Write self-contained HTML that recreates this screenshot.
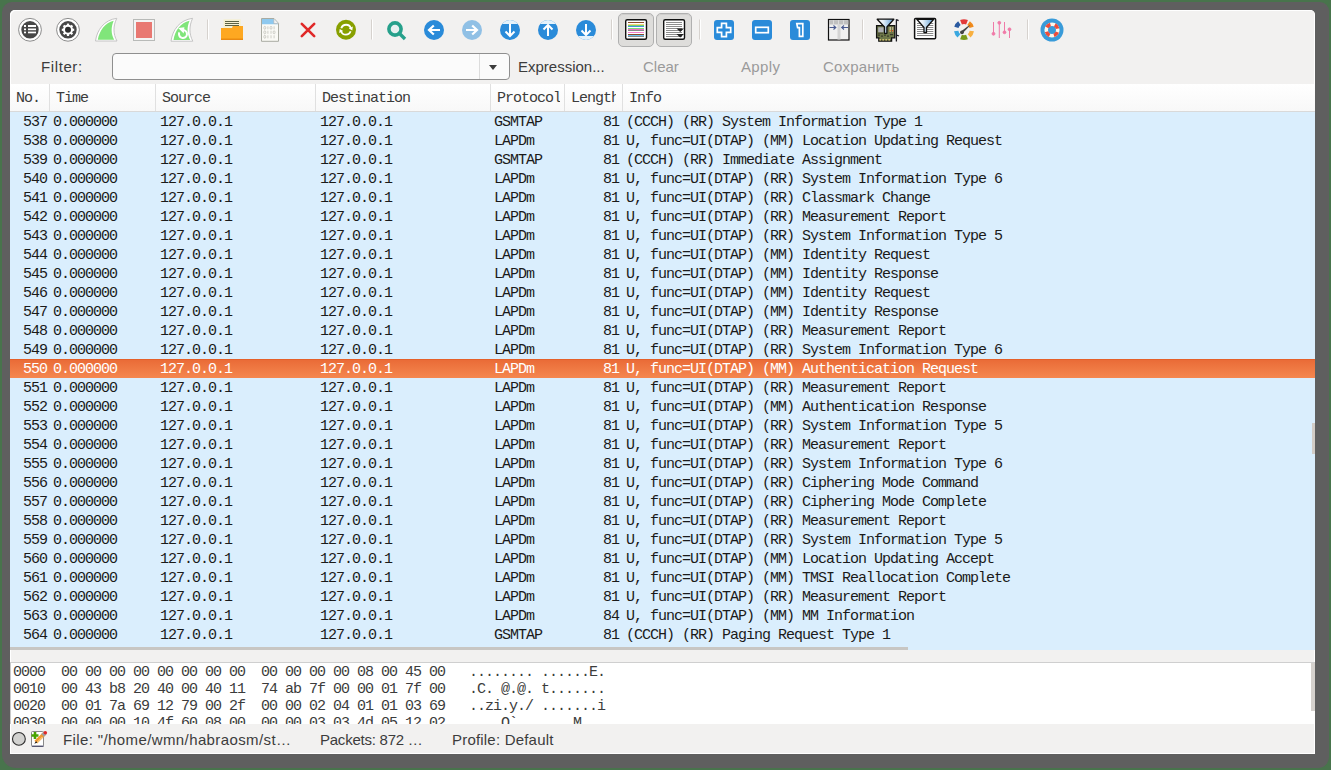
<!DOCTYPE html>
<html><head><meta charset="utf-8">
<style>
html,body{margin:0;padding:0;}
body{width:1331px;height:770px;background:#48744c;position:relative;overflow:hidden;font-family:"Liberation Sans",sans-serif;}
.a{position:absolute;}
#frame{left:2px;top:2px;width:1327px;height:766px;background:#5f5f5f;border-radius:10px 9px 11px 14px;}
#win{left:10px;top:10px;width:1305px;height:744px;background:#f2f1f0;border-radius:5px 5px 0 0;box-shadow:inset 1px 1px 0 #fff, inset -1px -1px 0 #fff;}
/* filter bar */
#flabel{left:41px;top:58px;font-size:15px;color:#3c3c3c;}
#combo{left:112px;top:53px;width:396px;height:25px;border:1px solid #8f8f8f;border-radius:4px;background:#fbfbfb;}
#combosep{left:479px;top:54px;width:1px;height:25px;background:#dcdcdc;}
#arrow{left:489px;top:65px;width:0;height:0;border-left:4px solid transparent;border-right:4px solid transparent;border-top:5px solid #3c3c3c;}
.fbtn{top:58px;font-size:15px;}
/* header */
#hdr{left:10px;top:84px;width:1305px;height:27px;background:linear-gradient(#fff,#f8f8f8);border-bottom:1px solid #d9d9d9;}
.hs{top:84px;width:1px;height:27px;background:#e0e0e0;}
.ht{top:89px;line-height:19px;font-family:"Liberation Mono",monospace;font-size:15px;letter-spacing:-1px;color:#3c3c3c;white-space:pre;overflow:hidden;}
/* list */
#list{left:10px;top:112px;width:1305px;height:538px;background:#daeefd;}
.r{position:absolute;left:10px;width:1305px;height:19px;font-family:"Liberation Mono",monospace;font-size:15px;letter-spacing:-1px;color:#1a1a1a;white-space:pre;line-height:19px;}
.r span{position:absolute;top:1px;}
.r .c0{left:13px;width:23px;text-align:right;}
.r .c1{left:43px;}
.r .c2{left:150px;}
.r .c3{left:310px;}
.r .c4{left:484px;}
.r .c5{left:570px;width:39px;text-align:right;}
.r .c6{left:616px;}
.r.sel{background:linear-gradient(#e25a22 0px,#ea6c38 1.5px,#f5874f 19px);color:#fff;}
#hscroll{left:10px;top:647px;width:898px;height:3px;background:#c8c6c3;}
#vscroll{left:1312px;top:423px;width:3px;height:31px;background:#d2ccc6;}
/* hex */
#hexsep{left:10px;top:662px;width:1305px;height:1px;background:#cfcfcf;}
#hex{left:10px;top:663px;width:1305px;height:61px;background:#fff;overflow:hidden;}
.hx{position:absolute;left:3px;margin-top:1px;font-family:"Liberation Mono",monospace;font-size:15px;letter-spacing:-1px;color:#3c3c3c;white-space:pre;line-height:17px;}
/* status */
.st{top:731px;font-size:15px;color:#3c3c3c;white-space:pre;}
</style></head><body>
<div id="frame" class="a"></div>
<div id="win" class="a"></div>
<svg class="a" style="left:0;top:0" width="1331" height="52" viewBox="0 0 1331 52">
<!-- separators -->
<g fill="#d6d2ce">
<rect x="207" y="19.5" width="1" height="20"/><rect x="371" y="19.5" width="1" height="20"/>
<rect x="611" y="19.5" width="1" height="20"/><rect x="699" y="19.5" width="1" height="20"/>
<rect x="862" y="19.5" width="1" height="20"/><rect x="1027" y="19.5" width="1" height="20"/>
</g>
<g fill="#ffffff">
<rect x="208" y="19.5" width="1" height="20"/><rect x="372" y="19.5" width="1" height="20"/>
<rect x="612" y="19.5" width="1" height="20"/><rect x="700" y="19.5" width="1" height="20"/>
<rect x="863" y="19.5" width="1" height="20"/><rect x="1028" y="19.5" width="1" height="20"/>
</g>
<!-- 1 interfaces -->
<circle cx="30" cy="29.8" r="11.4" fill="#fff" stroke="#8c8c8c" stroke-width="1"/>
<circle cx="30" cy="29.8" r="8.7" fill="#474747"/>
<g fill="#fff">
<rect x="24" y="25" width="2" height="2"/><rect x="24" y="28.5" width="2" height="1.7"/><rect x="24" y="31.6" width="2" height="1.7"/>
<rect x="28" y="25" width="8" height="2"/><rect x="28" y="28.5" width="8" height="1.7"/><rect x="28" y="31.6" width="8" height="1.7"/>
</g>
<!-- 2 options gear -->
<circle cx="68" cy="29.8" r="11.4" fill="#fff" stroke="#8c8c8c" stroke-width="1"/>
<circle cx="68" cy="29.8" r="8.7" fill="#474747"/>
<g transform="translate(68,29.8)">
<circle r="5" fill="#fff"/>
<g fill="#fff">
<rect x="-1.1" y="-6.2" width="2.2" height="12.4"/>
<rect x="-1.1" y="-6.2" width="2.2" height="12.4" transform="rotate(45)"/>
<rect x="-1.1" y="-6.2" width="2.2" height="12.4" transform="rotate(90)"/>
<rect x="-1.1" y="-6.2" width="2.2" height="12.4" transform="rotate(135)"/>
</g>
<circle r="3" fill="#2e2e2e"/>
</g>
<!-- 3 start fin -->
<path d="M95.5 41 C97 30 104 20 116.8 18.3 C113 26 113 34 117 41 Z" fill="#fff" stroke="#c4c4c4" stroke-width="1"/>
<path d="M97.8 39.8 C99.5 30.5 105 23 113.7 20.8 C110.8 27.5 111 34 114.2 39.8 Z" fill="#80e57a"/>
<!-- 4 stop -->
<rect x="133.5" y="19.5" width="21" height="21" fill="#f4f4f4" stroke="#b8bab8" stroke-width="1"/>
<rect x="136" y="22" width="16" height="16" fill="#e97872"/>
<!-- 5 restart fin -->
<path d="M171 41.2 C172.5 30 179.5 20 192.6 18.3 C189 26 189 34 192.8 41.2 Z" fill="#fff" stroke="#c4c4c4" stroke-width="1"/>
<path d="M173.5 40 C175 30.5 180.5 23 189.6 20.8 C186.7 27.5 187 34 190.2 40 Z" fill="#80e57a"/>
<path d="M183 30 A4 4 0 1 1 179.3 32.4" fill="none" stroke="#fff" stroke-width="2"/>
<path d="M178.2 28 L184.4 27.3 L183.7 33.6 Z" fill="#fff"/>
<!-- 6 open folder -->
<rect x="223.5" y="19.3" width="17.3" height="9" fill="#f6f0d2"/>
<g fill="#5c6244"><rect x="225" y="21" width="14" height="1"/><rect x="225" y="23" width="14" height="1"/><rect x="225" y="25" width="14" height="1"/></g>
<path d="M221 27.9 L232 27.9 L232.8 26.1 L243 26.1 L243 39.8 L221 39.8 Z" fill="#fea821"/>
<rect x="221" y="38.6" width="22" height="1.3" fill="#e8860c"/>
<!-- 7 document -->
<path d="M261.5 18.5 L274 18.5 L278.5 23.3 L278.5 41.3 L261.5 41.3 Z" fill="#fafaf6" stroke="#a9aba2" stroke-width="1"/>
<path d="M262 19 L273.7 19 L278 23.5 L278 24.2 L262 24.2 Z" fill="#8ec9ef"/>
<path d="M273.8 19 L273.8 23.6 L278.2 23.6" fill="#f2f2f2" stroke="#b0b0b0" stroke-width="0.6"/>
<g fill="none" stroke="#c4c4bc" stroke-width="0.8"><ellipse cx="264.8" cy="27.8" rx="1" ry="1.5"/><path d="M267.90000000000003 26.3 v3"/><ellipse cx="271.0" cy="27.8" rx="1" ry="1.5"/><path d="M274.1 26.3 v3"/><ellipse cx="264.8" cy="32.3" rx="1" ry="1.5"/><path d="M267.90000000000003 30.8 v3"/><path d="M271.0 30.8 v3"/><ellipse cx="274.1" cy="32.3" rx="1" ry="1.5"/><ellipse cx="264.8" cy="36.8" rx="1" ry="1.5"/><path d="M267.90000000000003 35.3 v3"/><path d="M271.0 35.3 v3"/><path d="M274.1 35.3 v3"/></g>
<!-- 8 close X -->
<path d="M301.8 23.8 L314.2 36.2 M314.2 23.8 L301.8 36.2" stroke="#e02828" stroke-width="2.6" stroke-linecap="round"/>
<!-- 9 reload -->
<circle cx="346" cy="29.8" r="10" fill="#88a000"/>
<path d="M341.3 28.3 A5 5 0 0 1 350.9 28.4" fill="none" stroke="#fff" stroke-width="1.8"/>
<path d="M350.6 31.3 A5 5 0 0 1 341.1 31.2" fill="none" stroke="#fff" stroke-width="1.8"/>
<path d="M352.8 26.5 L352.3 30.5 L348.8 28.6 Z" fill="#fff"/>
<path d="M339.2 33.1 L339.7 29.1 L343.2 31 Z" fill="#fff"/>
<!-- 10 find -->
<circle cx="395" cy="29" r="6.1" fill="#e8f0f0" stroke="#26a08b" stroke-width="3.6"/>
<path d="M399.5 33.5 L403.8 37.8" stroke="#26a08b" stroke-width="3.4" stroke-linecap="square"/>
<!-- 11 back -->
<circle cx="434" cy="30" r="10" fill="#2a8bd9"/>
<path d="M440 30 L429.5 30 M433.8 25.5 L429 30 L433.8 34.5" fill="none" stroke="#fff" stroke-width="2.2"/>
<!-- 12 forward -->
<circle cx="472" cy="30" r="10" fill="#90c0e5"/>
<path d="M466 30 L476.5 30 M472.2 25.5 L477 30 L472.2 34.5" fill="none" stroke="#fff" stroke-width="2.2"/>
<!-- 13 goto -->
<defs><linearGradient id="fun" x1="0" y1="0" x2="1" y2="0"><stop offset="0" stop-color="#ffffff"/><stop offset="0.35" stop-color="#e8f2fa"/><stop offset="1" stop-color="#5c9ed6"/></linearGradient><clipPath id="cl13"><circle cx="510" cy="30" r="10"/></clipPath><clipPath id="cl14"><circle cx="548" cy="30" r="10"/></clipPath><clipPath id="cl15"><circle cx="586" cy="30" r="10"/></clipPath></defs>
<g clip-path="url(#cl13)"><rect x="500" y="20" width="20" height="20" fill="#2a8bd9"/><rect x="500" y="19" width="20" height="5" fill="#e4f2fb"/></g>
<path d="M510 24 L510 36 M505.5 31.5 L510 36 L514.5 31.5" fill="none" stroke="#fff" stroke-width="2"/>
<!-- 14 first -->
<g clip-path="url(#cl14)"><rect x="538" y="20" width="20" height="20" fill="#2a8bd9"/><rect x="538" y="19" width="20" height="5" fill="#e4f2fb"/></g>
<path d="M548 36 L548 25 M543.5 29.5 L548 25 L552.5 29.5" fill="none" stroke="#fff" stroke-width="2"/>
<!-- 15 last -->
<g clip-path="url(#cl15)"><rect x="576" y="20" width="20" height="20" fill="#2a8bd9"/><rect x="576" y="36" width="20" height="5" fill="#e4f2fb"/></g>
<path d="M586 24 L586 35 M581.5 30.5 L586 35 L590.5 30.5" fill="none" stroke="#fff" stroke-width="2"/>
<!-- 16/17 toggled coloring buttons -->
<rect x="618.5" y="13.5" width="35" height="33" rx="4.5" fill="#dedddb" stroke="#b0b0b0" stroke-width="1"/>
<rect x="656.5" y="13.5" width="35" height="33" rx="4.5" fill="#dedddb" stroke="#b0b0b0" stroke-width="1"/>
<path d="M620 16.5 Q620 14.5 623 14.5 L649 14.5 Q652 14.5 652 16.5" fill="none" stroke="#cfcecc" stroke-width="1"/>
<path d="M658 16.5 Q658 14.5 661 14.5 L687 14.5 Q690 14.5 690 16.5" fill="none" stroke="#cfcecc" stroke-width="1"/>
<rect x="625.7" y="19.7" width="20.8" height="19.5" rx="1.5" fill="#fff" stroke="#111" stroke-width="1.4"/>
<g>
<rect x="628" y="22" width="16" height="1" fill="#8a4a2a"/>
<rect x="628" y="24" width="16" height="1" fill="#f6d57a"/>
<rect x="628" y="25" width="16" height="1" fill="#72d36e"/>
<rect x="628" y="26" width="16" height="1" fill="#4a8fe0"/>
<rect x="628" y="28" width="16" height="1" fill="#76dc76"/>
<rect x="628" y="29" width="16" height="1" fill="#ee70c2"/>
<rect x="628" y="30" width="16" height="1" fill="#888"/>
<rect x="628" y="32" width="16" height="1" fill="#f27ed0"/>
<rect x="628" y="34" width="16" height="1" fill="#8a4a2a"/>
<rect x="628" y="35" width="16" height="1" fill="#66c2f2"/>
<rect x="628" y="36" width="16" height="1" fill="#888"/>
</g>
<rect x="663.7" y="19.7" width="20.8" height="19.5" rx="1.5" fill="#fff" stroke="#111" stroke-width="1.4"/>
<g fill="#8c8c8c">
<rect x="666" y="22" width="16" height="1"/><rect x="666" y="24" width="16" height="1"/><rect x="666" y="26" width="16" height="1"/>
<rect x="666" y="28" width="16" height="1"/><rect x="666" y="30" width="16" height="1"/><rect x="666" y="32" width="16" height="1"/>
<rect x="666" y="34" width="16" height="1"/><rect x="666" y="36" width="16" height="1"/>
</g>
<path d="M676.5 28.5 L684 28.5 L680.2 32 Z M676.5 34 L684 34 L680.2 37.5 Z" fill="#222"/>
<!-- zoom in/out/normal -->
<rect x="714" y="20" width="20" height="20" rx="3" fill="#2a8bd9"/>
<path d="M721.6 23.3 h4.8 v4.3 h4.3 v4.8 h-4.3 v4.3 h-4.8 v-4.3 h-4.3 v-4.8 h4.3 Z" fill="none" stroke="#fff" stroke-width="1.7"/>
<rect x="752" y="20" width="20" height="20" rx="3" fill="#2a8bd9"/>
<rect x="755.7" y="27.3" width="12.6" height="5.4" fill="none" stroke="#fff" stroke-width="1.7"/>
<rect x="790" y="20" width="20" height="20" rx="3" fill="#2a8bd9"/>
<path d="M796.8 23.6 h6 v12.8 h-3.4 v-8.8 h-1.8 Z" fill="none" stroke="#fff" stroke-width="1.7"/>
<!-- resize columns -->
<rect x="828.5" y="19.5" width="20.5" height="20.5" fill="#f0f0f0" stroke="#111" stroke-width="1.2"/>
<rect x="829.2" y="20.2" width="19.2" height="4.3" fill="#c0c0c0"/>
<g fill="#e8e8e8"><rect x="833" y="20.2" width="0.7" height="4.3"/><rect x="838" y="20.2" width="0.7" height="4.3"/><rect x="843" y="20.2" width="0.7" height="4.3"/></g>
<rect x="837.5" y="24.5" width="3" height="15" fill="#d4d4d4"/>
<path d="M829.5 27.5 L835.5 27.5 M833.5 25.5 L835.8 27.5 L833.5 29.5 M848 27.5 L842 27.5 M844 25.5 L841.7 27.5 L844 29.5" fill="none" stroke="#4a5a90" stroke-width="1.1"/>
<!-- capture filter -->
<path d="M876.6 25.6 L894.8 25.6 L894.8 37.8 L891.6 37.8 L891.6 41.2 L878.8 41.2 L878.8 37.8 L876.6 37.8 Z" fill="#6d7748" stroke="#111" stroke-width="1.3"/>
<rect x="878.2" y="27.3" width="5.5" height="5" fill="#aeb0b4"/>
<g fill="#3a3a2a"><rect x="878" y="34.5" width="2" height="1.2"/><rect x="881" y="35.5" width="2" height="1.2"/><rect x="884" y="34.5" width="2" height="1.2"/><rect x="887" y="35.5" width="2" height="1.2"/><rect x="890" y="34" width="3" height="1.2"/><rect x="878" y="32.8" width="5" height="0.8"/></g>
<g fill="#e6cf7a"><rect x="879.5" y="39" width="1.3" height="1.6"/><rect x="882.5" y="39" width="1.3" height="1.6"/><rect x="885.5" y="39" width="1.3" height="1.6"/><rect x="888.5" y="39" width="1.3" height="1.6"/></g>
<g><rect x="889.6" y="27" width="1.2" height="5" fill="#d8d0a8"/><rect x="889.6" y="30" width="1.2" height="1.5" fill="#e07020"/><rect x="892" y="27" width="1.2" height="5" fill="#b8a888"/><rect x="892" y="30" width="1.2" height="1.5" fill="#d05020"/></g>
<path d="M896.4 19.2 L896.4 41.6 M896.4 19.5 L898.6 20.6 M896.4 35 L899 36" stroke="#1a1a22" stroke-width="1.3" fill="none"/>
<path d="M877.2 19.2 L893.8 19.2 L886.9 27 L886.9 33.3 L884.5 33.3 L884.5 27 Z" fill="url(#fun)" stroke="#111" stroke-width="1.3" stroke-linejoin="round"/>
<!-- display filter -->
<rect x="914.6" y="18.4" width="21" height="20.4" rx="1" fill="#fff" stroke="#111" stroke-width="1.5"/>
<g fill="#8a8a8a"><rect x="917" y="23" width="16.3" height="1"/><rect x="917" y="25" width="16.3" height="1"/><rect x="917" y="27" width="16.3" height="1"/><rect x="917" y="29" width="16.3" height="1"/><rect x="917" y="31" width="16.3" height="1"/><rect x="917" y="33" width="16.3" height="1"/><rect x="917" y="35" width="16.3" height="1"/></g>
<path d="M916.8 19.3 L933.7 19.3 L926.5 27.5 L926.5 32.5 L924 32.5 L924 27.5 Z" fill="url(#fun)" stroke="#111" stroke-width="1.3" stroke-linejoin="round"/>
<!-- coloring rules dial -->
<g transform="translate(964,29.6)" fill="none" stroke-width="4.4">
<path d="M-3 -7.4 A8 8 0 0 1 3 -7.4" stroke="#e23a3a" stroke-width="4.8"/>
<path d="M4.6 -6.5 A8 8 0 0 1 7.6 -2.3" stroke="#f08a1c"/>
<path d="M7.8 1.4 A8 8 0 0 1 5.1 6.2" stroke="#f8b040"/>
<path d="M3 7.4 A8 8 0 0 1 -3 7.4" stroke="#7a9a1a" stroke-width="4.8"/>
<path d="M-5.1 6.2 A8 8 0 0 1 -7.8 1.4" stroke="#3aa8e0"/>
<path d="M-7.6 -2.3 A8 8 0 0 1 -4.6 -6.5" stroke="#2a5aa0"/>
</g>
<path d="M960.5 31.8 L967.5 26.5 L970.5 24.8 L968.2 27.6 L962.3 33.6 Z" fill="#444"/>
<circle cx="962" cy="32.3" r="1.9" fill="#444"/>
<!-- prefs sliders -->
<g stroke="#f07aa8" stroke-width="1" fill="#f07aa8">
<line x1="993.5" y1="22" x2="993.5" y2="34"/><circle cx="993.5" cy="33.8" r="1.4"/>
<line x1="999.3" y1="23" x2="999.3" y2="38"/><circle cx="999.3" cy="22.8" r="1.4"/>
<line x1="1004.5" y1="22" x2="1004.5" y2="32.5"/><circle cx="1004.5" cy="32.3" r="1.4"/>
<line x1="1009.5" y1="29.5" x2="1009.5" y2="38"/><circle cx="1009.5" cy="29.3" r="1.4"/>
</g>
<!-- help lifebuoy -->
<circle cx="1052" cy="30" r="11.5" fill="#399bd9"/>
<circle cx="1052" cy="30" r="5.8" fill="none" stroke="#fbf8ee" stroke-width="3.6"/>
<circle cx="1052" cy="30" r="5.8" fill="none" stroke="#ec4c3a" stroke-width="3.6" stroke-dasharray="4.55 4.55" stroke-dashoffset="6.83"/>
</svg>
<div id="flabel" class="a" style="letter-spacing:0.6px">Filter:</div>
<div id="combo" class="a"></div>
<div id="combosep" class="a"></div>
<div id="arrow" class="a"></div>
<div class="a fbtn" style="left:518px;color:#3c3c3c">Expression...</div>
<div class="a fbtn" style="left:643px;color:#9a9a9a">Clear</div>
<div class="a fbtn" style="left:741px;color:#9a9a9a;letter-spacing:0.37px">Apply</div>
<div class="a fbtn" style="left:823px;color:#9a9a9a;letter-spacing:0.22px">Сохранить</div>
<div id="hdr" class="a"></div>
<div class="a hs" style="left:49px"></div>
<div class="a hs" style="left:155px"></div>
<div class="a hs" style="left:315px"></div>
<div class="a hs" style="left:490px"></div>
<div class="a hs" style="left:564px"></div>
<div class="a hs" style="left:622px"></div>
<div class="a ht" style="left:16px;width:32px">No.</div>
<div class="a ht" style="left:56px;width:98px">Time</div>
<div class="a ht" style="left:162px;width:150px">Source</div>
<div class="a ht" style="left:322px;width:166px">Destination</div>
<div class="a ht" style="left:497px;width:63px">Protocol</div>
<div class="a ht" style="left:571px;width:45px">Length</div>
<div class="a ht" style="left:629px;width:100px">Info</div>
<div id="list" class="a"></div>
<div class="r" style="top:112px"><span class="c0">537</span><span class="c1">0.000000</span><span class="c2">127.0.0.1</span><span class="c3">127.0.0.1</span><span class="c4">GSMTAP</span><span class="c5">81</span><span class="c6">(CCCH) (RR) System Information Type 1</span></div>
<div class="r" style="top:131px"><span class="c0">538</span><span class="c1">0.000000</span><span class="c2">127.0.0.1</span><span class="c3">127.0.0.1</span><span class="c4">LAPDm</span><span class="c5">81</span><span class="c6">U, func=UI(DTAP) (MM) Location Updating Request</span></div>
<div class="r" style="top:150px"><span class="c0">539</span><span class="c1">0.000000</span><span class="c2">127.0.0.1</span><span class="c3">127.0.0.1</span><span class="c4">GSMTAP</span><span class="c5">81</span><span class="c6">(CCCH) (RR) Immediate Assignment</span></div>
<div class="r" style="top:169px"><span class="c0">540</span><span class="c1">0.000000</span><span class="c2">127.0.0.1</span><span class="c3">127.0.0.1</span><span class="c4">LAPDm</span><span class="c5">81</span><span class="c6">U, func=UI(DTAP) (RR) System Information Type 6</span></div>
<div class="r" style="top:188px"><span class="c0">541</span><span class="c1">0.000000</span><span class="c2">127.0.0.1</span><span class="c3">127.0.0.1</span><span class="c4">LAPDm</span><span class="c5">81</span><span class="c6">U, func=UI(DTAP) (RR) Classmark Change</span></div>
<div class="r" style="top:207px"><span class="c0">542</span><span class="c1">0.000000</span><span class="c2">127.0.0.1</span><span class="c3">127.0.0.1</span><span class="c4">LAPDm</span><span class="c5">81</span><span class="c6">U, func=UI(DTAP) (RR) Measurement Report</span></div>
<div class="r" style="top:226px"><span class="c0">543</span><span class="c1">0.000000</span><span class="c2">127.0.0.1</span><span class="c3">127.0.0.1</span><span class="c4">LAPDm</span><span class="c5">81</span><span class="c6">U, func=UI(DTAP) (RR) System Information Type 5</span></div>
<div class="r" style="top:245px"><span class="c0">544</span><span class="c1">0.000000</span><span class="c2">127.0.0.1</span><span class="c3">127.0.0.1</span><span class="c4">LAPDm</span><span class="c5">81</span><span class="c6">U, func=UI(DTAP) (MM) Identity Request</span></div>
<div class="r" style="top:264px"><span class="c0">545</span><span class="c1">0.000000</span><span class="c2">127.0.0.1</span><span class="c3">127.0.0.1</span><span class="c4">LAPDm</span><span class="c5">81</span><span class="c6">U, func=UI(DTAP) (MM) Identity Response</span></div>
<div class="r" style="top:283px"><span class="c0">546</span><span class="c1">0.000000</span><span class="c2">127.0.0.1</span><span class="c3">127.0.0.1</span><span class="c4">LAPDm</span><span class="c5">81</span><span class="c6">U, func=UI(DTAP) (MM) Identity Request</span></div>
<div class="r" style="top:302px"><span class="c0">547</span><span class="c1">0.000000</span><span class="c2">127.0.0.1</span><span class="c3">127.0.0.1</span><span class="c4">LAPDm</span><span class="c5">81</span><span class="c6">U, func=UI(DTAP) (MM) Identity Response</span></div>
<div class="r" style="top:321px"><span class="c0">548</span><span class="c1">0.000000</span><span class="c2">127.0.0.1</span><span class="c3">127.0.0.1</span><span class="c4">LAPDm</span><span class="c5">81</span><span class="c6">U, func=UI(DTAP) (RR) Measurement Report</span></div>
<div class="r" style="top:340px"><span class="c0">549</span><span class="c1">0.000000</span><span class="c2">127.0.0.1</span><span class="c3">127.0.0.1</span><span class="c4">LAPDm</span><span class="c5">81</span><span class="c6">U, func=UI(DTAP) (RR) System Information Type 6</span></div>
<div class="r sel" style="top:359px"><span class="c0">550</span><span class="c1">0.000000</span><span class="c2">127.0.0.1</span><span class="c3">127.0.0.1</span><span class="c4">LAPDm</span><span class="c5">81</span><span class="c6">U, func=UI(DTAP) (MM) Authentication Request</span></div>
<div class="r" style="top:378px"><span class="c0">551</span><span class="c1">0.000000</span><span class="c2">127.0.0.1</span><span class="c3">127.0.0.1</span><span class="c4">LAPDm</span><span class="c5">81</span><span class="c6">U, func=UI(DTAP) (RR) Measurement Report</span></div>
<div class="r" style="top:397px"><span class="c0">552</span><span class="c1">0.000000</span><span class="c2">127.0.0.1</span><span class="c3">127.0.0.1</span><span class="c4">LAPDm</span><span class="c5">81</span><span class="c6">U, func=UI(DTAP) (MM) Authentication Response</span></div>
<div class="r" style="top:416px"><span class="c0">553</span><span class="c1">0.000000</span><span class="c2">127.0.0.1</span><span class="c3">127.0.0.1</span><span class="c4">LAPDm</span><span class="c5">81</span><span class="c6">U, func=UI(DTAP) (RR) System Information Type 5</span></div>
<div class="r" style="top:435px"><span class="c0">554</span><span class="c1">0.000000</span><span class="c2">127.0.0.1</span><span class="c3">127.0.0.1</span><span class="c4">LAPDm</span><span class="c5">81</span><span class="c6">U, func=UI(DTAP) (RR) Measurement Report</span></div>
<div class="r" style="top:454px"><span class="c0">555</span><span class="c1">0.000000</span><span class="c2">127.0.0.1</span><span class="c3">127.0.0.1</span><span class="c4">LAPDm</span><span class="c5">81</span><span class="c6">U, func=UI(DTAP) (RR) System Information Type 6</span></div>
<div class="r" style="top:473px"><span class="c0">556</span><span class="c1">0.000000</span><span class="c2">127.0.0.1</span><span class="c3">127.0.0.1</span><span class="c4">LAPDm</span><span class="c5">81</span><span class="c6">U, func=UI(DTAP) (RR) Ciphering Mode Command</span></div>
<div class="r" style="top:492px"><span class="c0">557</span><span class="c1">0.000000</span><span class="c2">127.0.0.1</span><span class="c3">127.0.0.1</span><span class="c4">LAPDm</span><span class="c5">81</span><span class="c6">U, func=UI(DTAP) (RR) Ciphering Mode Complete</span></div>
<div class="r" style="top:511px"><span class="c0">558</span><span class="c1">0.000000</span><span class="c2">127.0.0.1</span><span class="c3">127.0.0.1</span><span class="c4">LAPDm</span><span class="c5">81</span><span class="c6">U, func=UI(DTAP) (RR) Measurement Report</span></div>
<div class="r" style="top:530px"><span class="c0">559</span><span class="c1">0.000000</span><span class="c2">127.0.0.1</span><span class="c3">127.0.0.1</span><span class="c4">LAPDm</span><span class="c5">81</span><span class="c6">U, func=UI(DTAP) (RR) System Information Type 5</span></div>
<div class="r" style="top:549px"><span class="c0">560</span><span class="c1">0.000000</span><span class="c2">127.0.0.1</span><span class="c3">127.0.0.1</span><span class="c4">LAPDm</span><span class="c5">81</span><span class="c6">U, func=UI(DTAP) (MM) Location Updating Accept</span></div>
<div class="r" style="top:568px"><span class="c0">561</span><span class="c1">0.000000</span><span class="c2">127.0.0.1</span><span class="c3">127.0.0.1</span><span class="c4">LAPDm</span><span class="c5">81</span><span class="c6">U, func=UI(DTAP) (MM) TMSI Reallocation Complete</span></div>
<div class="r" style="top:587px"><span class="c0">562</span><span class="c1">0.000000</span><span class="c2">127.0.0.1</span><span class="c3">127.0.0.1</span><span class="c4">LAPDm</span><span class="c5">81</span><span class="c6">U, func=UI(DTAP) (RR) Measurement Report</span></div>
<div class="r" style="top:606px"><span class="c0">563</span><span class="c1">0.000000</span><span class="c2">127.0.0.1</span><span class="c3">127.0.0.1</span><span class="c4">LAPDm</span><span class="c5">84</span><span class="c6">U, func=UI(DTAP) (MM) MM Information</span></div>
<div class="r" style="top:625px"><span class="c0">564</span><span class="c1">0.000000</span><span class="c2">127.0.0.1</span><span class="c3">127.0.0.1</span><span class="c4">GSMTAP</span><span class="c5">81</span><span class="c6">(CCCH) (RR) Paging Request Type 1</span></div>
<div id="hscroll" class="a"></div>
<div id="vscroll" class="a"></div>
<div id="hexsep" class="a"></div>
<div id="hex" class="a">
<div class="hx" style="top:0px">0000  00 00 00 00 00 00 00 00  00 00 00 00 08 00 45 00   ........ ......E.</div>
<div class="hx" style="top:17px">0010  00 43 b8 20 40 00 40 11  74 ab 7f 00 00 01 7f 00   .C. @.@. t.......</div>
<div class="hx" style="top:34px">0020  00 01 7a 69 12 79 00 2f  00 00 02 04 01 01 03 69   ..zi.y./ .......i</div>
<div class="hx" style="top:51px">0030  00 00 00 10 4f 60 08 00  00 00 03 03 4d 05 12 02   ....O`.. ....M...</div>
</div>
<svg class="a" style="left:8px;top:726px" width="48" height="28" viewBox="8 726 48 28">
<circle cx="18.9" cy="738.9" r="6.4" fill="#d2d2d0" stroke="#2e2e2e" stroke-width="1.1"/>
<rect x="31.5" y="731.5" width="12" height="15" rx="1" fill="#fff" stroke="#8a8a8a" stroke-width="1"/>
<rect x="32" y="745.6" width="11.5" height="1.2" fill="#4a4a6a"/>
<path d="M35 732 v7 M31.5 735.5 h7" stroke="#48a400" stroke-width="2.6"/>
<path d="M35.8 742.2 L44.2 733.8" stroke="#f29a30" stroke-width="3.8"/><path d="M42.6 735.4 L45.4 732.6" stroke="#a0a0a0" stroke-width="3.8"/>
<path d="M36.5 743 L42.5 737" stroke="#fde0a0" stroke-width="1"/>
<circle cx="45.3" cy="732.8" r="1.8" fill="#e02828"/>
<path d="M34.3 743.8 L36 741.2 L37.4 742.6 Z" fill="#111"/>
</svg>
<div class="a" style="left:10px;top:663px;width:1px;height:61px;background:#c9c9c9"></div>
<div class="a" style="left:1311px;top:663px;width:4px;height:48px;background:#d5d1cd"></div>
<div class="a st" style="left:63px;letter-spacing:0.39px">File: "/home/wmn/habraosm/st…</div>
<div class="a st" style="left:320px;letter-spacing:-0.24px">Packets: 872 …</div>
<div class="a st" style="left:452px;letter-spacing:0.2px">Profile: Default</div>
</body></html>
